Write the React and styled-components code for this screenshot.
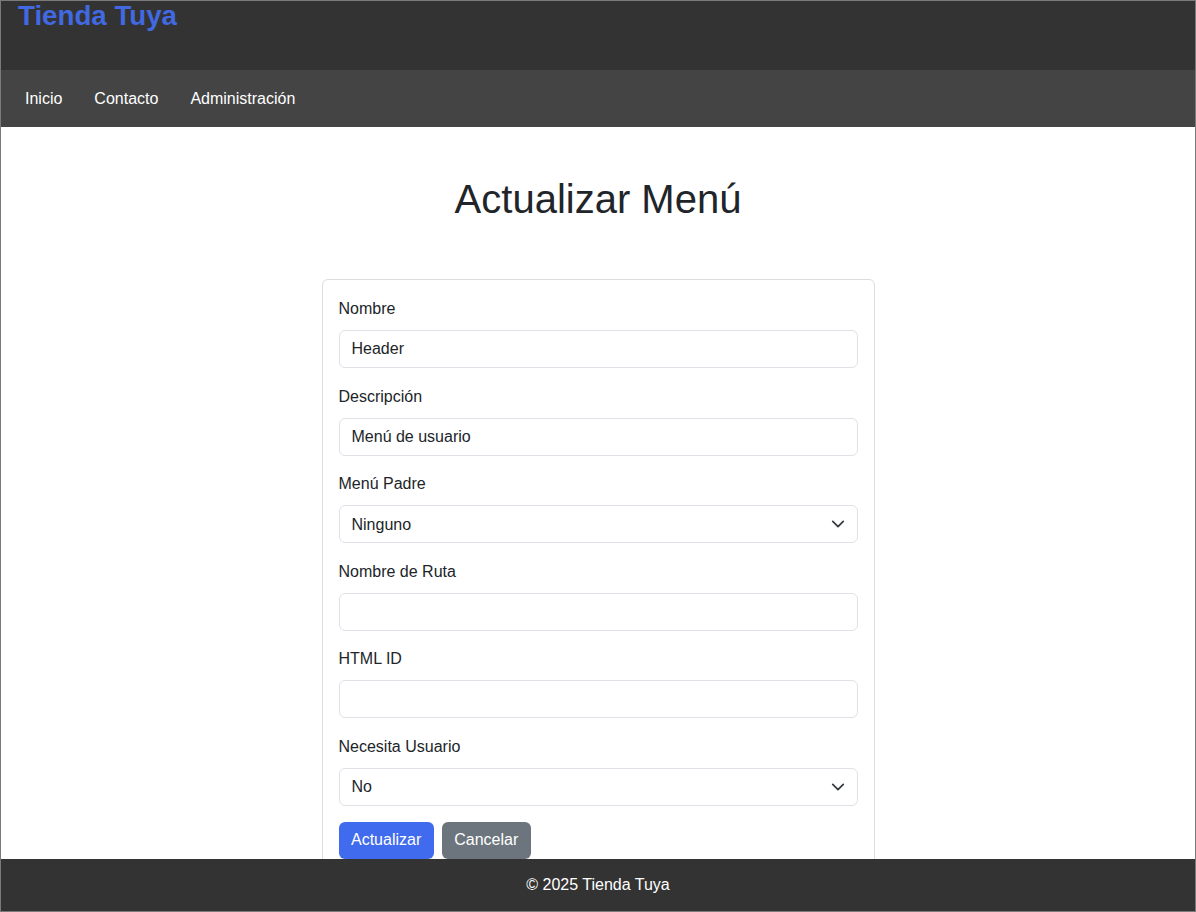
import styled, { createGlobalStyle } from "styled-components";

const GlobalStyle = createGlobalStyle`
  body {
    margin: 0;
    font-family: "Liberation Sans", Arial, sans-serif;
    color: #212529;
    background: #fff;
  }
  body::after {
    content: "";
    position: fixed;
    inset: 0;
    border: 1px solid #7a7a7a;
    pointer-events: none;
    z-index: 10;
  }
`

const Header = styled.header`
  background: #333;
  height: 70px;
  padding: 0 18px;
  box-sizing: border-box;
  border-top: 1px solid #555;
`
const Brand = styled.h1`
  margin: 0;
  margin-top: -1px;
  font-size: 27.7px;
  font-weight: bold;
  color: #4169e1;
  line-height: normal;
`
const Nav = styled.nav`
  background: #444;
  height: 57px;
  display: flex;
  align-items: center;
  padding: 0 9px;
`
const NavLink = styled.a`
  color: #fff;
  font-size: 16px;
  padding: 0 16px;
  text-decoration: none;
`
const Main = styled.main`
  padding: 48px 20px 80px;
`
const Title = styled.h2`
  margin: 0 0 56px;
  text-align: center;
  font-size: 40px;
  font-weight: 500;
  line-height: 1.2;
  color: #212529;
`
const Card = styled.form`
  width: 553px;
  box-sizing: border-box;
  margin: 0 auto;
  border: 1px solid #dcdcdc;
  border-radius: 6px;
  padding: 17px 16px 16px;
`
const Field = styled.div`
  margin-bottom: 16.6px;

  &:nth-of-type(6) {
    margin-bottom: 16px;
  }
`
const Label = styled.label`
  display: block;
  font-size: 16px;
  line-height: 24px;
  margin-bottom: 9px;
`
const Input = styled.input`
  display: block;
  width: 100%;
  box-sizing: border-box;
  height: 38px;
  padding: 6px 12px;
  font: inherit;
  font-size: 16px;
  color: #212529;
  border: 1px solid #dee2e6;
  border-radius: 6px;
  outline: none;
`
const SelectWrap = styled.div`
  position: relative;
`
const Select = styled.select`
  display: block;
  width: 100%;
  box-sizing: border-box;
  height: 38px;
  padding: 6px 36px 6px 12px;
  font: inherit;
  font-size: 16px;
  color: #212529;
  background: #fff;
  border: 1px solid #dee2e6;
  border-radius: 6px;
  appearance: none;
  outline: none;
`
const Chevron = styled.svg`
  position: absolute;
  right: 13px;
  top: 12px;
  width: 14px;
  height: 14px;
  pointer-events: none;
`
const Actions = styled.div`
  display: flex;
  gap: 8px;
`
const Button = styled.button`
  font: inherit;
  font-size: 16px;
  color: #fff;
  border: none;
  border-radius: 6px;
  height: 37px;
  padding: 0 12.5px;
  background: ${(p) => (p.$secondary ? "#6c757d" : "#416bef")};
`
const Footer = styled.footer`
  position: fixed;
  left: 0;
  right: 0;
  bottom: 0;
  height: 53px;
  background: #333;
  color: #fff;
  display: flex;
  align-items: center;
  justify-content: center;
  font-size: 16px;
  padding-bottom: 2px;
  box-sizing: border-box;
`

const SelectField = ({ value, options }) => (
  <SelectWrap>
    <Select defaultValue={value}>
      {options.map((o) => (
        <option key={o}>{o}</option>
      ))}
    </Select>
    <Chevron viewBox="0 0 16 16" fill="none" stroke="#343a40" strokeWidth="2" strokeLinecap="round" strokeLinejoin="round">
      <path d="m2 5 6 6 6-6" />
    </Chevron>
  </SelectWrap>
)

export default function App() {
  return (
    <>
      <GlobalStyle />
      <Header>
        <Brand>Tienda Tuya</Brand>
      </Header>
      <Nav>
        <NavLink href="#">Inicio</NavLink>
        <NavLink href="#">Contacto</NavLink>
        <NavLink href="#">Administración</NavLink>
      </Nav>
      <Main>
        <Title>Actualizar Menú</Title>
        <Card onSubmit={(e) => e.preventDefault()}>
          <Field>
            <Label>Nombre</Label>
            <Input defaultValue="Header" />
          </Field>
          <Field>
            <Label>Descripción</Label>
            <Input defaultValue="Menú de usuario" />
          </Field>
          <Field>
            <Label>Menú Padre</Label>
            <SelectField value="Ninguno" options={["Ninguno"]} />
          </Field>
          <Field>
            <Label>Nombre de Ruta</Label>
            <Input />
          </Field>
          <Field>
            <Label>HTML ID</Label>
            <Input />
          </Field>
          <Field>
            <Label>Necesita Usuario</Label>
            <SelectField value="No" options={["No", "Sí"]} />
          </Field>
          <Actions>
            <Button type="submit">Actualizar</Button>
            <Button type="button" $secondary>Cancelar</Button>
          </Actions>
        </Card>
      </Main>
      <Footer>© 2025 Tienda Tuya</Footer>
    </>
  );
}
